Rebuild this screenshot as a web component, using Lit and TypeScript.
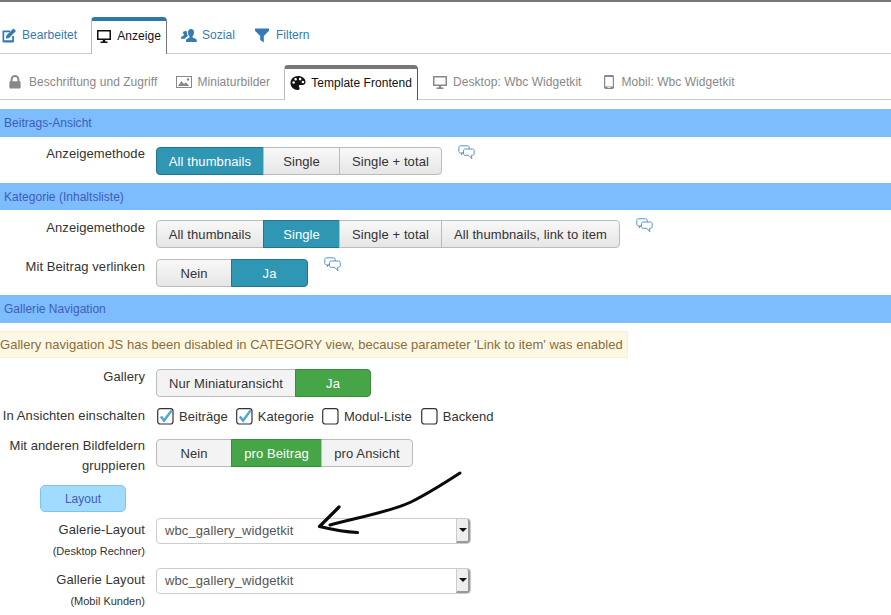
import { LitElement, html, css, svg } from "lit";
import { customElement } from "lit/decorators.js";

const ic = {
  edit: svg`<path d="M2.500 3.500h7.500v1.800H4.200v8h8V9h1.800v5.200a1.300 1.300 0 0 1-1.300 1.300H3.800a1.300 1.300 0 0 1-1.300-1.300z"/><path d="M13.400 1.500l2.600 2.600-7 7-3.200.6.6-3.200z"/>`,
  monitor: svg`<path fill-rule="evenodd" d="M1 2h14v10H9.200v1.400h2.300V15h-7v-1.600h2.300V12H1zm1.500 1.500v7h11v-7z"/>`,
  users: svg`<path d="M10 2c2 0 3 1.500 3 3.400 0 1.500-.6 3-1.500 3.800v1c0 .5 3.500 1.200 4 2.300.2.600.3 1.500.3 2.500H5c0-1 .1-1.900.3-2.500.5-1.100 3.200-1.800 3.200-2.300v-1C7.600 8.400 7 6.900 7 5.400 7 3.500 8 2 10 2z"/><path d="M4.500 4c.6 0 1.200.2 1.600.5-.3.900-.3 2.700.8 4.300-.5.900-2.500 1.500-3 3H0c0-.9.100-1.500.3-1.900.4-.8 2.700-1.200 2.700-1.700v-.8C2.400 7.300 2 6.200 2 5.900 2 4.700 3 4 4.500 4z"/>`,
  filter: svg`<path d="M1 1.500h14v2.300L9.800 9v6.500L6.200 13V9L1 3.800z"/>`,
  lock: svg`<path fill-rule="evenodd" d="M3 7V5a5 5 0 0 1 10 0v2h.5c.5 0 .9.400.9.900v6.700c0 .5-.4.900-.9.900h-11a.9.900 0 0 1-.9-.9V7.900c0-.5.400-.9.900-.9zm2.200 0h5.600V5a2.800 2.800 0 0 0-5.600 0z"/>`,
  image: svg`<path fill-rule="evenodd" d="M0 2h16v12H0zm1 1v10h14V3z"/><path d="M2 12l3.500-5 2.500 3 2-1.500 3.500 3.500z"/><circle cx="12" cy="5.500" r="1.200"/>`,
  palette: svg`<path fill-rule="evenodd" d="M8 1C3.800 1 .5 4 .5 8s3.300 7 7.200 7c1.300 0 1.900-.8 1.900-1.600 0-1-.8-1.300-.8-2.200 0-.8.7-1.300 1.500-1.300h2.100c1.800 0 3.100-1.300 3.100-3C15.500 3.400 12.200 1 8 1zM3.600 8.800a1.300 1.300 0 1 1 0-2.600 1.300 1.300 0 0 1 0 2.600zm2-3.200a1.300 1.300 0 1 1 0-2.600 1.300 1.300 0 0 1 0 2.600zm4.500-.2a1.300 1.300 0 1 1 0-2.600 1.300 1.300 0 0 1 0 2.600zm2.800 2.900a1.300 1.300 0 1 1 0-2.600 1.300 1.300 0 0 1 0 2.600z"/>`,
  phone: svg`<path fill-rule="evenodd" d="M4.500 1h7c.8 0 1.500.6 1.500 1.400v11.200c0 .8-.7 1.400-1.500 1.400h-7C3.700 15 3 14.400 3 13.600V2.400C3 1.600 3.700 1 4.500 1zm-.3 2v9.500h7.600V3zM6.500 13.200v.8h3v-.8z"/>`,
};

const icon = (p: unknown, size = 16) =>
  html`<svg class="ico" width=${size} height=${size} viewBox="0 0 16 16" fill="currentColor">${p}</svg>`;

const bubble = svg`<svg class="bub" width="17" height="15" viewBox="0 0 17 15" fill="none" stroke="#5b93c9" stroke-width="1"><path d="M2.500 .8h7c1 0 1.700.6 1.700 1.500v3c0 .9-.7 1.500-1.700 1.500H5.200L3.300 10l.3-2.200h-1C1.500 7.800.8 7.200.8 6.300v-4C.8 1.400 1.500.8 2.500.8z" fill="#fff"/><path d="M7.200 4h7.300c1 0 1.700.6 1.700 1.500v3.300c0 .9-.7 1.500-1.700 1.500h-1l.3 3.500-3-3.500H7.200c-1 0-1.700-.6-1.700-1.500V5.500C5.500 4.600 6.200 4 7.200 4z" fill="#fff"/></svg>`;

const check = html`<svg class="cb" width="17" height="17" viewBox="0 0 17 17"><rect x=".7" y=".7" width="15.300" height="15.300" rx="2.500" fill="#fff" stroke="#333" stroke-width="1.200"/><path d="M3.800 8.600l3.300 4.100L14.600 2.400" fill="none" stroke="#6a9dc0" stroke-width="2.400"/><path d="M4.500 8.800l2.700 2.900 6.300-8" fill="none" stroke="#45b0e0" stroke-width="1.600"/></svg>`;
const uncheck = html`<svg class="cb" width="17" height="17" viewBox="0 0 17 17"><rect x=".7" y=".7" width="15.300" height="15.300" rx="2.500" fill="#fff" stroke="#333" stroke-width="1.200"/></svg>`;

@customElement("app-root")
export class AppRoot extends LitElement {
  static styles = css`
    :host {
      display: block;
      position: relative;
      width: 891px;
      height: 615px;
      overflow: hidden;
      background: #fff;
      font-family: "Liberation Sans", Arial, sans-serif;
      font-size: 13px;
      letter-spacing: 0.02px;
      color: #333;
      border-top: 2px solid #777;
      box-sizing: border-box;
    }
    .tabs { display: flex; align-items: flex-end; border-bottom: 1px solid #ccc; box-sizing: border-box; font-size: 12px; letter-spacing: 0.05px; }
    .tabs.main { height: 52px; padding-top: 15px; }
    .tabs.sub { height: 46px; padding-top: 11px; }
    .tab { display: flex; align-items: center; height: 100%; box-sizing: border-box; white-space: nowrap; }
    .main .tab { color: #337ab7; }
    .sub .tab { color: #888; }
    .ico { flex: none; }
    .tab.active {
      color: #111;
      background: #fff;
      border: 1px solid #bbb;
      border-bottom: none;
      border-radius: 4px 4px 0 0;
      margin-bottom: -1px;
      height: calc(100% + 1px);
      position: relative;
    }
    .main .tab.active { border-top: 4px solid #2a7aa5; border-right-color: #777; padding-bottom: 4px; }
    .sub .tab.active { border-top: 4px solid #777; border-right-color: #555; padding-bottom: 4px; }
    .section {
      background: #7dbdfe;
      color: #3f5cbc;
      font-size: 12px;
      height: 28px;
      line-height: 28px;
      padding-left: 4px;
      box-sizing: border-box;
    }
    .row { display: grid; grid-template-columns: 145px auto; column-gap: 11px; justify-content: start; }
    .lbl { text-align: right; color: #333; line-height: 20px; letter-spacing: 0.08px; }
    .small { font-size: 11px; display: block; line-height: 20px; margin-top: 1px; letter-spacing: 0; }
    .ctrl { display: flex; align-items: flex-start; }
    .group { display: flex; }
    .btn {
      height: 28px;
      box-sizing: border-box;
      display: flex;
      align-items: center;
      justify-content: center;
      border: 1px solid #bbb;
      margin-left: -1px;
      color: #333;
      background: linear-gradient(#f8f8f8, #e6e6e6);
      font-size: 13px;
      letter-spacing: 0.1px;
    }
    .btn:first-child { margin-left: 0; border-radius: 4px 0 0 4px; }
    .btn:last-child { border-radius: 0 4px 4px 0; }
    .btn.on { background: #2f96b4; border-color: #24748b; color: #fff; }
    .btn.green { background: #46a546; border-color: #3d8b3d; color: #fff; }
    .flat .btn { background: #f3f3f3; }
    .flat .btn.green { background: #46a546; }
    .bub { margin-left: 16px; margin-top: -2px; }
    .alert {
      width: 628px;
      height: 27px;
      box-sizing: border-box;
      background: #fcf8e3;
      border: 1px solid #fbeed5;
      border-left: none;
      color: #8a6d3b;
      line-height: 25px;
      white-space: nowrap;
    }
    .checks { display: flex; align-items: center; height: 20px; color: #333; padding-left: 1px; letter-spacing: 0.05px; }
    .checks label { display: flex; align-items: center; gap: 5px; margin-right: 8px; }
    .layout-btn {
      display: flex;
      align-items: center;
      justify-content: center;
      margin-left: 40px;
      width: 86px;
      height: 27px;
      box-sizing: border-box;
      background: #a1dcff;
      border: 1px solid #7fc4ee;
      border-radius: 5px;
      color: #3f5cbc;
      font-size: 12px;
    }
    .select {
      position: relative;
      width: 315px;
      height: 26px;
      box-sizing: border-box;
      border: 1px solid #ccc;
      border-radius: 4px;
      padding-left: 8px;
      line-height: 24px;
      color: #555;
      background: #fff;
      letter-spacing: 0.1px;
    }
    .arrow-box {
      position: absolute;
      right: 0;
      top: 0;
      bottom: 0;
      width: 14px;
      box-sizing: border-box;
      background: #eee;
      border-left: 1px solid #ccc;
      border-right: 2px solid #999;
      border-bottom: 2px solid #999;
      border-radius: 0 3px 3px 0;
      display: flex;
      align-items: center;
      justify-content: center;
    }
    .caret { width: 0; height: 0; border: 4px solid transparent; border-top: 4px solid #111; border-bottom: none; }
    .scribble { position: absolute; left: 0; top: -2px; pointer-events: none; }
  `;

  private tab(label: string, p: unknown, left: number, gap: number, right: number, active = false, size = 16) {
    return html`<div class="tab ${active ? "active" : ""}" style="padding-left:${left}px;padding-right:${right}px">
      <span style="display:flex;margin-right:${gap}px">${icon(p, size)}</span>${label}
    </div>`;
  }

  private btns(items: [string, number, string?][], flat = false) {
    return html`<div class="group ${flat ? "flat" : ""}">
      ${items.map(([t, w, c]) => html`<div class="btn ${c ?? ""}" style="width:${w}px">${t}</div>`)}
    </div>`;
  }

  render() {
    return html`
      <div class="tabs main">
        ${this.tab("Bearbeitet", ic.edit, -3, 6, 14)}
        ${this.tab("Anzeige", ic.monitor, 4, 5, 5, true)}
        ${this.tab("Sozial", ic.users, 14, 5, 19)}
        ${this.tab("Filtern", ic.filter, 0, 6, 0)}
      </div>
      <div class="tabs sub">
        ${this.tab("Beschriftung und Zugriff", ic.lock, 8, 7, 19, false, 14)}
        ${this.tab("Miniaturbilder", ic.image, 0, 5, 14)}
        ${this.tab("Template Frontend", ic.palette, 5, 5, 5, true)}
        ${this.tab("Desktop: Wbc Widgetkit", ic.monitor, 14, 5, 19)}
        ${this.tab("Mobil: Wbc Widgetkit", ic.phone, 0, 5, 0)}
      </div>

      <div class="section" style="margin-top:9px">Beitrags-Ansicht</div>
      <div class="row" style="margin-top:10px">
        <div class="lbl" style="margin-top:-3px">Anzeigemethode</div>
        <div class="ctrl">
          ${this.btns([["All thumbnails", 108, "on"], ["Single", 77], ["Single + total", 103]])}${bubble}
        </div>
      </div>

      <div class="section" style="margin-top:8px;height:27px">Kategorie (Inhaltsliste)</div>
      <div class="row" style="margin-top:10px">
        <div class="lbl" style="margin-top:-2px">Anzeigemethode</div>
        <div class="ctrl">
          ${this.btns([["All thumbnails", 108, ""], ["Single", 77, "on"], ["Single + total", 103], ["All thumbnails, link to item", 179]])}${bubble}
        </div>
      </div>
      <div class="row" style="margin-top:11px">
        <div class="lbl" style="margin-top:-2px">Mit Beitrag verlinken</div>
        <div class="ctrl">
          ${this.btns([["Nein", 76], ["Ja", 77, "on"]])}${bubble}
        </div>
      </div>

      <div class="section" style="margin-top:8px">Gallerie Navigation</div>
      <div class="alert" style="margin-top:8px">Gallery navigation JS has been disabled in CATEGORY view, because parameter 'Link to item' was enabled</div>

      <div class="row" style="margin-top:11px">
        <div class="lbl" style="margin-top:-2px">Gallery</div>
        <div class="ctrl">${this.btns([["Nur Miniaturansicht", 140], ["Ja", 76, "green"]], true)}</div>
      </div>
      <div class="row" style="margin-top:9px">
        <div class="lbl">In Ansichten einschalten</div>
        <div class="checks">
          <label>${check}Beiträge</label>
          <label>${check}Kategorie</label>
          <label style="margin-right:9px">${uncheck}Modul-Liste</label>
          <label>${uncheck}Backend</label>
        </div>
      </div>
      <div class="row" style="margin-top:13px">
        <div class="lbl" style="margin-top:-3px">Mit anderen Bildfeldern<br />gruppieren</div>
        <div class="ctrl">${this.btns([["Nein", 76], ["pro Beitrag", 91, "green"], ["pro Ansicht", 92]], true)}</div>
      </div>

      <div class="layout-btn" style="margin-top:9px">Layout</div>

      <div class="row" style="margin-top:6px">
        <div class="lbl" style="margin-top:2px">Galerie-Layout<small class="small">(Desktop Rechner)</small></div>
        <div class="select">wbc_gallery_widgetkit<div class="arrow-box"><div class="caret"></div></div></div>
      </div>
      <div class="row" style="margin-top:7px">
        <div class="lbl" style="margin-top:2px">Gallerie Layout<small class="small">(Mobil Kunden)</small></div>
        <div class="select">wbc_gallery_widgetkit<div class="arrow-box"><div class="caret"></div></div></div>
      </div>

      <svg class="scribble" width="891" height="615" fill="none" stroke="#0a0a0a" stroke-linecap="round" stroke-linejoin="round">
        <path d="M460 473C440 486 425 495 411 502C390 512 355 518 330 525" stroke-width="3"/>
        <path d="M339 507L319.500 526.500C330 529 345 532 357.500 532.500" stroke-width="3.200"/>
      </svg>
    `;
  }
}
